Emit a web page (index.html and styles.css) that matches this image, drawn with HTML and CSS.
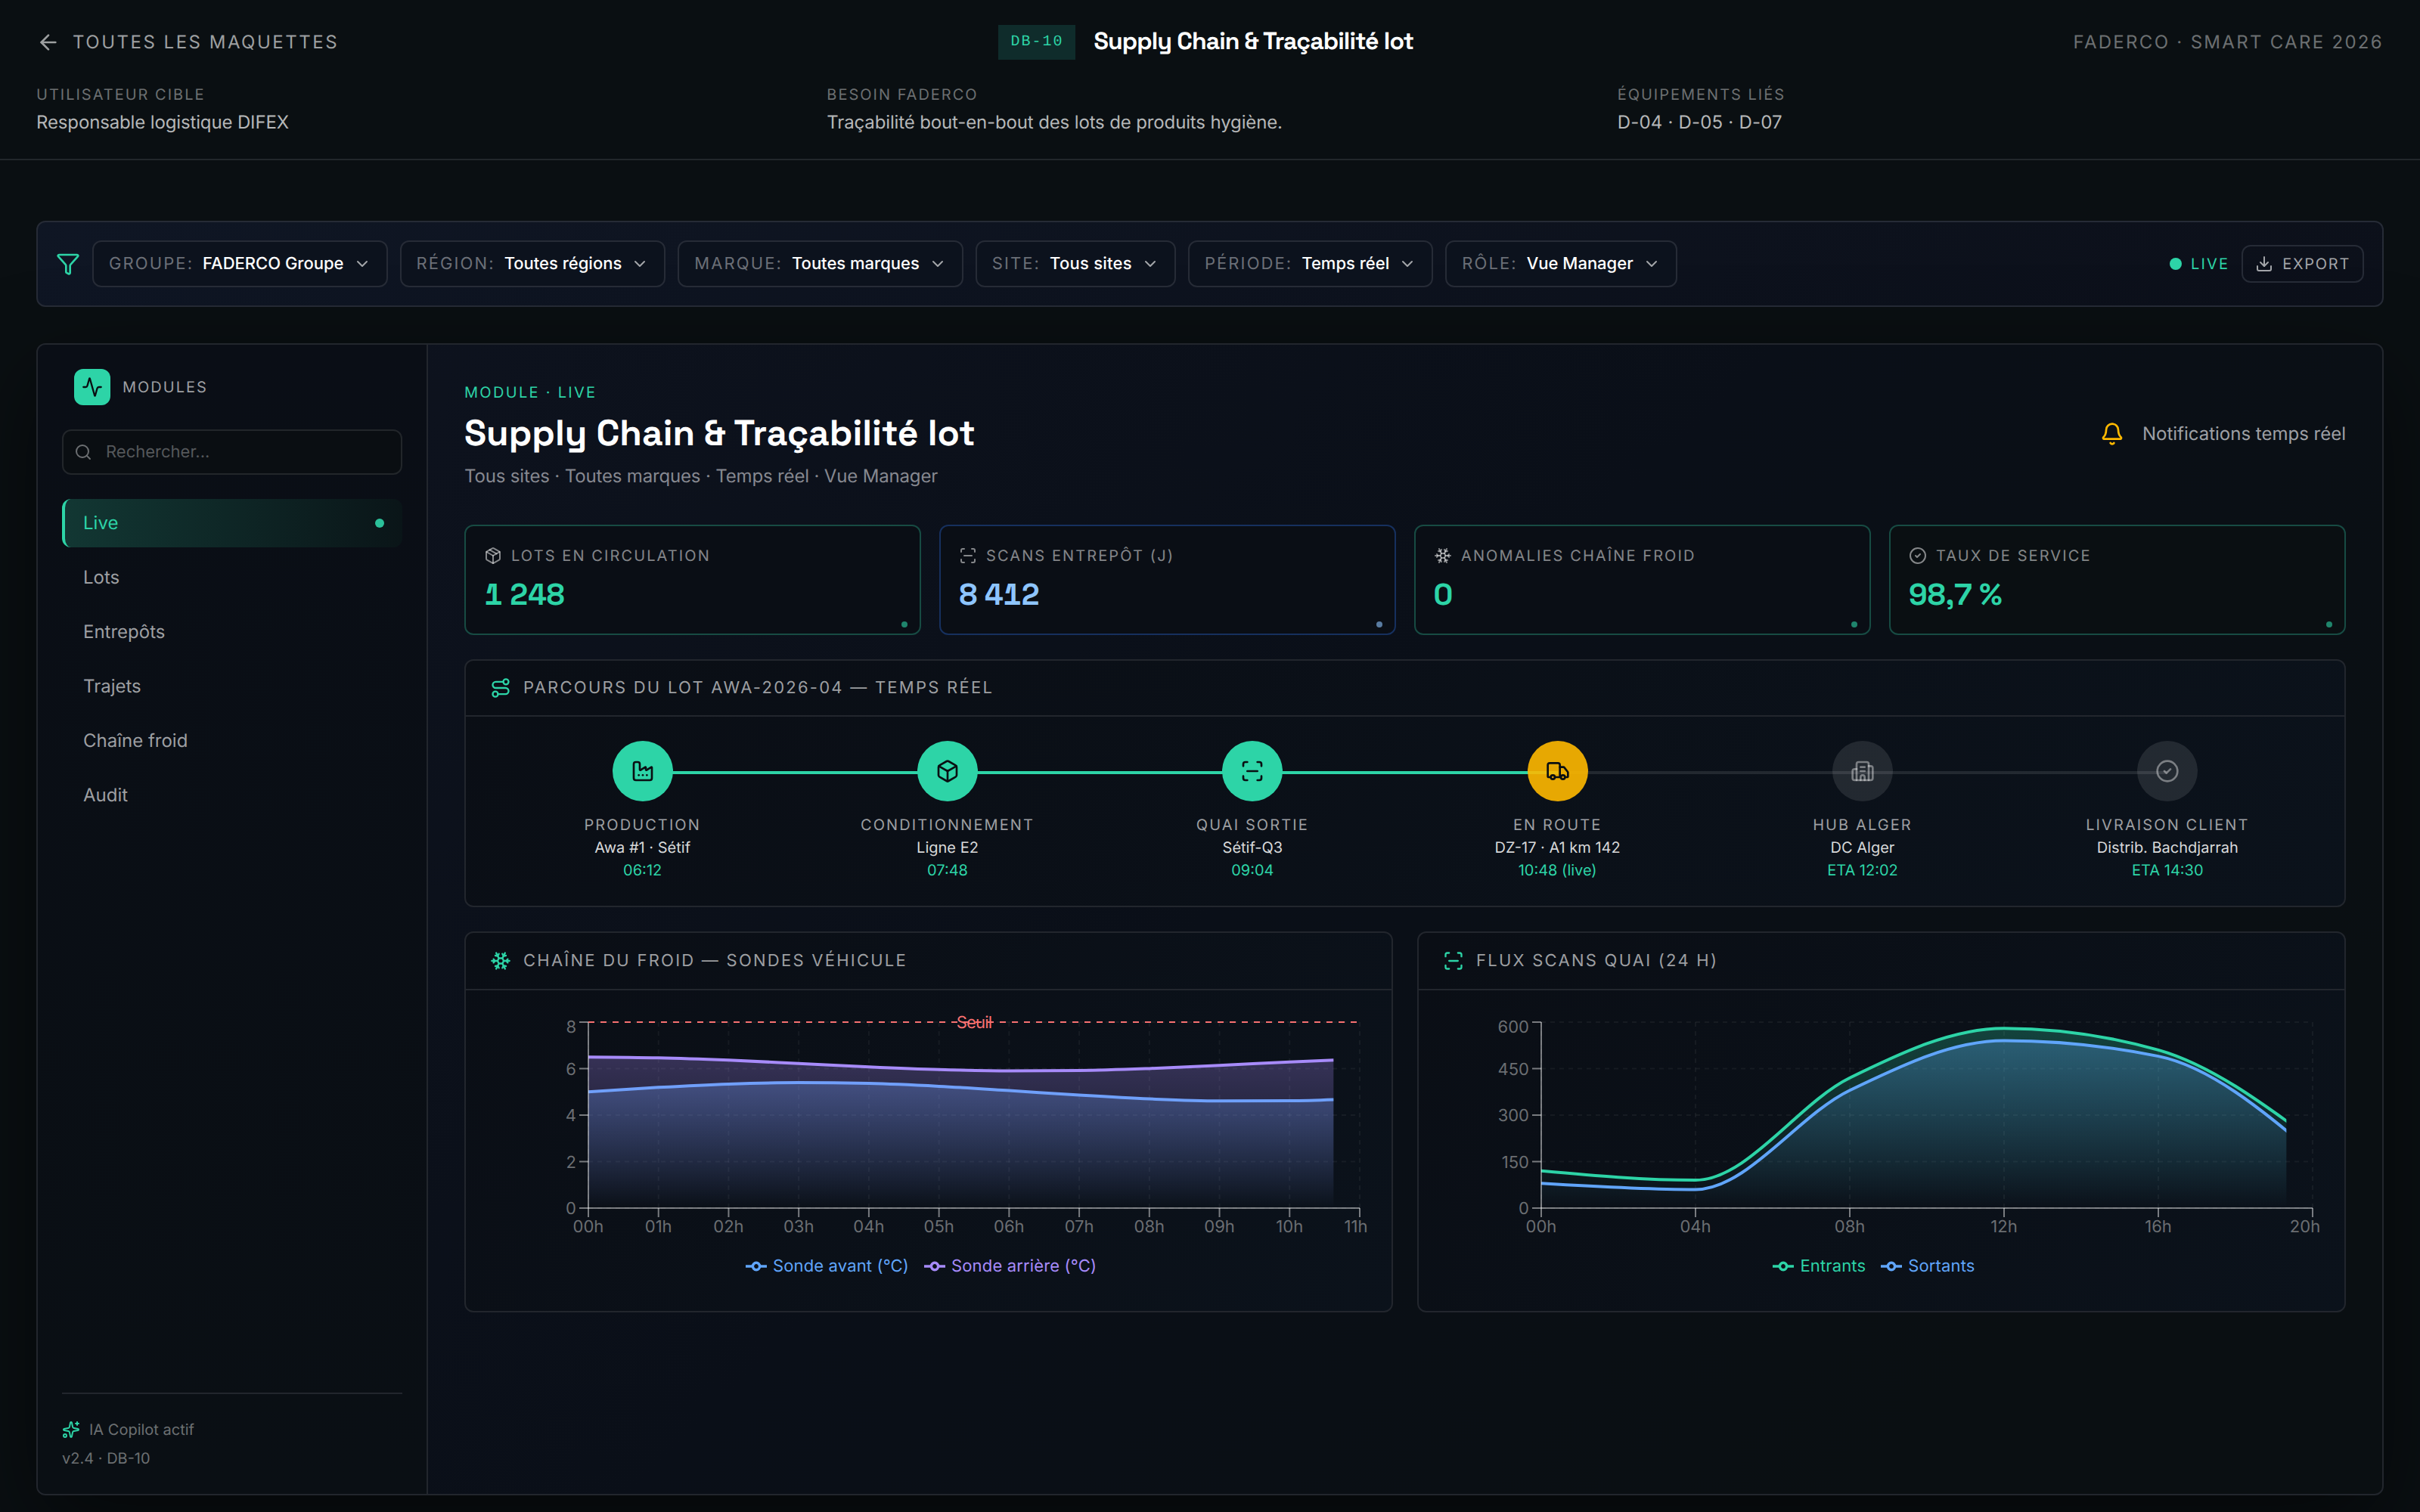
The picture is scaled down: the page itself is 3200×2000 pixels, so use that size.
FILE: index.html
```html
<!DOCTYPE html>
<html lang="fr">
<head>
    <meta charset="UTF-8">
    <title>Supply Chain &amp; Traçabilité lot</title>
    <link rel="stylesheet" href="styles.css">
</head>
<body>
    <!-- icon sprite -->
    <svg class="sprite" aria-hidden="true">
        <symbol id="i-arrow-left" viewBox="0 0 24 24"><path d="m12 19-7-7 7-7"/><path d="M19 12H5"/></symbol>
        <symbol id="i-funnel" viewBox="0 0 24 24"><path d="M10 20a1 1 0 0 0 .553.895l2 1A1 1 0 0 0 14 21v-7a2 2 0 0 1 .517-1.341L21.74 4.67A1 1 0 0 0 21 3H3a1 1 0 0 0-.742 1.67l7.225 7.989A2 2 0 0 1 10 14z"/></symbol>
        <symbol id="i-chevron" viewBox="0 0 24 24"><path d="m6 9 6 6 6-6"/></symbol>
        <symbol id="i-download" viewBox="0 0 24 24"><path d="M12 15V3"/><path d="M21 15v4a2 2 0 0 1-2 2H5a2 2 0 0 1-2-2v-4"/><path d="m7 10 5 5 5-5"/></symbol>
        <symbol id="i-activity" viewBox="0 0 24 24"><path d="M22 12h-2.48a2 2 0 0 0-1.93 1.46l-2.35 8.36a.25.25 0 0 1-.48 0L9.24 2.18a.25.25 0 0 0-.48 0l-2.35 8.36A2 2 0 0 1 4.49 12H2"/></symbol>
        <symbol id="i-search" viewBox="0 0 24 24"><path d="m21 21-4.34-4.34"/><circle cx="11" cy="11" r="8"/></symbol>
        <symbol id="i-sparkles" viewBox="0 0 24 24"><path d="M11.017 2.814a1 1 0 0 1 1.966 0l1.051 5.558a2 2 0 0 0 1.594 1.594l5.558 1.051a1 1 0 0 1 0 1.966l-5.558 1.051a2 2 0 0 0-1.594 1.594l-1.051 5.558a1 1 0 0 1-1.966 0l-1.051-5.558a2 2 0 0 0-1.594-1.594l-5.558-1.051a1 1 0 0 1 0-1.966l5.558-1.051a2 2 0 0 0 1.594-1.594z"/><path d="M20 2v4"/><path d="M22 4h-4"/><circle cx="4" cy="20" r="2"/></symbol>
        <symbol id="i-bell" viewBox="0 0 24 24"><path d="M10.268 21a2 2 0 0 0 3.464 0"/><path d="M3.262 15.326A1 1 0 0 0 4 17h16a1 1 0 0 0 .74-1.673C19.41 13.956 18 12.499 18 8A6 6 0 0 0 6 8c0 4.499-1.411 5.956-2.738 7.326"/></symbol>
        <symbol id="i-package" viewBox="0 0 24 24"><path d="M11 21.73a2 2 0 0 0 2 0l7-4A2 2 0 0 0 21 16V8a2 2 0 0 0-1-1.73l-7-4a2 2 0 0 0-2 0l-7 4A2 2 0 0 0 3 8v8a2 2 0 0 0 1 1.73z"/><path d="M12 22V12"/><path d="M3.29 7 12 12l8.71-5"/><path d="m7.5 4.27 9 5.15"/></symbol>
        <symbol id="i-box" viewBox="0 0 24 24"><path d="M21 8a2 2 0 0 0-1-1.73l-7-4a2 2 0 0 0-2 0l-7 4A2 2 0 0 0 3 8v8a2 2 0 0 0 1 1.73l7 4a2 2 0 0 0 2 0l7-4A2 2 0 0 0 21 16Z"/><path d="m3.3 7 8.7 5 8.7-5"/><path d="M12 22V12"/></symbol>
        <symbol id="i-scan" viewBox="0 0 24 24"><path d="M3 7V5a2 2 0 0 1 2-2h2"/><path d="M17 3h2a2 2 0 0 1 2 2v2"/><path d="M21 17v2a2 2 0 0 1-2 2h-2"/><path d="M7 21H5a2 2 0 0 1-2-2v-2"/><path d="M7 12h10"/></symbol>
        <symbol id="i-snow" viewBox="0 0 24 24"><path d="m10 20-1.25-2.5L6 18"/><path d="M10 4 8.75 6.5 6 6"/><path d="m14 20 1.25-2.5L18 18"/><path d="m14 4 1.25 2.5L18 6"/><path d="m17 21-3-6h-4"/><path d="m17 3-3 6 1.5 3"/><path d="M2 12h6.5L10 9"/><path d="m20 10-1.5 2 1.5 2"/><path d="M22 12h-6.5L14 15"/><path d="m4 10 1.5 2L4 14"/><path d="m7 21 3-6-1.5-3"/><path d="m7 3 3 6h4"/></symbol>
        <symbol id="i-check" viewBox="0 0 24 24"><circle cx="12" cy="12" r="10"/><path d="m9 12 2 2 4-4"/></symbol>
        <symbol id="i-route" viewBox="0 0 24 24"><circle cx="6" cy="19" r="3"/><path d="M9 19h8.5a3.5 3.5 0 0 0 0-7h-11a3.5 3.5 0 0 1 0-7H15"/><circle cx="18" cy="5" r="3"/></symbol>
        <symbol id="i-factory" viewBox="0 0 24 24"><path d="M12 16h.01"/><path d="M16 16h.01"/><path d="M8 16h.01"/><path d="M3 19a2 2 0 0 0 2 2h14a2 2 0 0 0 2-2V8.5a.5.5 0 0 0-.769-.422l-4.462 2.844A.5.5 0 0 1 15 10.5v-2a.5.5 0 0 0-.769-.422L9.77 10.922A.5.5 0 0 1 9 10.5V5a2 2 0 0 0-2-2H5a2 2 0 0 0-2 2z"/></symbol>
        <symbol id="i-truck" viewBox="0 0 24 24"><path d="M14 18V6a2 2 0 0 0-2-2H4a2 2 0 0 0-2 2v11a1 1 0 0 0 1 1h2"/><path d="M15 18H9"/><path d="M19 18h2a1 1 0 0 0 1-1v-3.65a1 1 0 0 0-.22-.624l-3.48-4.35A1 1 0 0 0 17.52 8H14"/><circle cx="17" cy="18" r="2"/><circle cx="7" cy="18" r="2"/></symbol>
        <symbol id="i-building" viewBox="0 0 24 24"><path d="M10 12h4"/><path d="M10 8h4"/><path d="M14 21v-3a2 2 0 0 0-4 0v3"/><path d="M6 10H4a2 2 0 0 0-2 2v7a2 2 0 0 0 2 2h16a2 2 0 0 0 2-2V9a2 2 0 0 0-2-2h-2"/><path d="M6 21V5a2 2 0 0 1 2-2h8a2 2 0 0 1 2 2v16"/></symbol>
    </svg>

    <header class="topbar">
        <div class="topbar-row">
            <a class="back"><svg class="icon icon-32"><use href="#i-arrow-left"/></svg>Toutes les maquettes</a>
            <div class="topbar-title">
                <span class="code">DB-10</span>
                <h1>Supply Chain &amp; Traçabilité lot</h1>
            </div>
            <span class="brand">FADERCO · Smart Care 2026</span>
        </div>
        <dl class="meta">
            <div><dt>Utilisateur cible</dt><dd>Responsable logistique DIFEX</dd></div>
            <div><dt>Besoin FADERCO</dt><dd>Traçabilité bout-en-bout des lots de produits hygiène.</dd></div>
            <div><dt>Équipements liés</dt><dd class="codes">D-04 · D-05 · D-07</dd></div>
        </dl>
    </header>

    <main class="page">
        <section class="filters">
            <svg class="icon icon-32 green"><use href="#i-funnel"/></svg>
            <button class="select"><span>Groupe:</span><b>FADERCO Groupe</b><svg class="icon icon-24"><use href="#i-chevron"/></svg></button>
            <button class="select"><span>Région:</span><b>Toutes régions</b><svg class="icon icon-24"><use href="#i-chevron"/></svg></button>
            <button class="select"><span>Marque:</span><b>Toutes marques</b><svg class="icon icon-24"><use href="#i-chevron"/></svg></button>
            <button class="select wide"><span>Site:</span><b>Tous sites</b><svg class="icon icon-24"><use href="#i-chevron"/></svg></button>
            <button class="select"><span>Période:</span><b>Temps réel</b><svg class="icon icon-24"><use href="#i-chevron"/></svg></button>
            <button class="select"><span>Rôle:</span><b>Vue Manager</b><svg class="icon icon-24"><use href="#i-chevron"/></svg></button>
            <div class="filters-right">
                <span class="live"><i class="live-dot"></i>Live</span>
                <button class="export"><svg class="icon icon-24"><use href="#i-download"/></svg>Export</button>
            </div>
        </section>

        <section class="shell">
            <aside class="sidebar">
                <div class="sidebar-head">
                    <span class="logo"><svg class="icon icon-28"><use href="#i-activity"/></svg></span>
                    <span>Modules</span>
                </div>
                <div class="search"><svg class="icon icon-24"><use href="#i-search"/></svg>Rechercher...</div>
                <nav class="nav">
                    <a class="active">Live<i></i></a>
                    <a>Lots</a>
                    <a>Entrepôts</a>
                    <a>Trajets</a>
                    <a>Chaîne froid</a>
                    <a>Audit</a>
                </nav>
                <div class="sidebar-foot">
                    <div><svg class="icon icon-24 green"><use href="#i-sparkles"/></svg>IA Copilot actif</div>
                    <div>v2.4 · DB-10</div>
                </div>
            </aside>

            <div class="content">
                <div class="content-head">
                    <div>
                        <div class="eyebrow">Module · Live</div>
                        <h2>Supply Chain &amp; Traçabilité lot</h2>
                        <p>Tous sites · Toutes marques · Temps réel · Vue Manager</p>
                    </div>
                    <div class="notif"><svg class="icon icon-32"><use href="#i-bell"/></svg>Notifications temps réel</div>
                </div>

                <div class="kpis">
                    <div class="kpi"><div class="kpi-label"><svg class="icon icon-24"><use href="#i-package"/></svg>Lots en circulation</div><div class="kpi-value">1 248</div></div>
                    <div class="kpi blue"><div class="kpi-label"><svg class="icon icon-24"><use href="#i-scan"/></svg>Scans entrepôt (J)</div><div class="kpi-value">8 412</div></div>
                    <div class="kpi"><div class="kpi-label"><svg class="icon icon-24"><use href="#i-snow"/></svg>Anomalies chaîne froid</div><div class="kpi-value">0</div></div>
                    <div class="kpi"><div class="kpi-label"><svg class="icon icon-24"><use href="#i-check"/></svg>Taux de service</div><div class="kpi-value">98,7 %</div></div>
                </div>

                <div class="card">
                    <div class="card-head"><svg class="icon icon-28 green"><use href="#i-route"/></svg>Parcours du lot AWA-2026-04 — temps réel</div>
                    <ol class="steps">
                        <li class="done"><div class="bubble"><svg class="icon icon-32"><use href="#i-factory"/></svg></div><em>Production</em><span>Awa #1 · Sétif</span><time>06:12</time></li>
                        <li class="done"><div class="bubble"><svg class="icon icon-32"><use href="#i-box"/></svg></div><em>Conditionnement</em><span>Ligne E2</span><time>07:48</time></li>
                        <li class="done"><div class="bubble"><svg class="icon icon-32"><use href="#i-scan"/></svg></div><em>Quai sortie</em><span>Sétif-Q3</span><time>09:04</time></li>
                        <li class="current"><div class="bubble"><svg class="icon icon-32"><use href="#i-truck"/></svg></div><em>En route</em><span>DZ-17 · A1 km 142</span><time>10:48 (live)</time></li>
                        <li><div class="bubble"><svg class="icon icon-32"><use href="#i-building"/></svg></div><em>Hub Alger</em><span>DC Alger</span><time>ETA 12:02</time></li>
                        <li><div class="bubble"><svg class="icon icon-32"><use href="#i-check"/></svg></div><em>Livraison client</em><span>Distrib. Bachdjarrah</span><time>ETA 14:30</time></li>
                    </ol>
                </div>

                <div class="charts">
                    <div class="card">
                        <div class="card-head"><svg class="icon icon-28 green"><use href="#i-snow"/></svg>Chaîne du froid — sondes véhicule</div>
                        <div class="chart">
                            <svg id="chart-cold" viewBox="0 0 1160 360"></svg>
                            <div class="legend">
                                <span class="c-blue"><svg viewBox="0 0 32 32"><path d="M0 16h10.7a5.3 5.3 0 1 1 10.6 0H32M21.3 16a5.3 5.3 0 1 1-10.6 0"/></svg>Sonde avant (°C)</span>
                                <span class="c-violet"><svg viewBox="0 0 32 32"><path d="M0 16h10.7a5.3 5.3 0 1 1 10.6 0H32M21.3 16a5.3 5.3 0 1 1-10.6 0"/></svg>Sonde arrière (°C)</span>
                            </div>
                        </div>
                    </div>
                    <div class="card">
                        <div class="card-head"><svg class="icon icon-28 green"><use href="#i-scan"/></svg>Flux scans quai (24 h)</div>
                        <div class="chart">
                            <svg id="chart-scans" viewBox="0 0 1160 360"></svg>
                            <div class="legend">
                                <span class="c-green"><svg viewBox="0 0 32 32"><path d="M0 16h10.7a5.3 5.3 0 1 1 10.6 0H32M21.3 16a5.3 5.3 0 1 1-10.6 0"/></svg>Entrants</span>
                                <span class="c-blue"><svg viewBox="0 0 32 32"><path d="M0 16h10.7a5.3 5.3 0 1 1 10.6 0H32M21.3 16a5.3 5.3 0 1 1-10.6 0"/></svg>Sortants</span>
                            </div>
                        </div>
                    </div>
                </div>
            </div>
        </section>
    </main>
    <script src="charts.js"></script>
</body>
</html>
```

FILE: styles.css
```css
* { box-sizing: border-box; }
body { margin: 0; height: 2000px; overflow: hidden; background: #0a0f12; color: #fff; font-family: Inter, sans-serif; font-size: 24px; line-height: 1.5; text-rendering: geometricPrecision; }
h1, h2, p, dl, dd, ol { margin: 0; padding: 0; }
button { font: inherit; color: inherit; background: none; text-rendering: inherit; }
.sprite { position: absolute; width: 0; height: 0; }
.icon { flex: none; fill: none; stroke: currentColor; stroke-width: 2; stroke-linecap: round; stroke-linejoin: round; }
.icon-24 { width: 24px; height: 24px; }
.icon-28 { width: 28px; height: 28px; }
.icon-32 { width: 32px; height: 32px; }
.green { color: #2dd4a7; }

/* top bar */
.topbar { height: 212px; padding: 32px 48px 0; border-bottom: 2px solid #22272b; }
.topbar-row { display: flex; align-items: center; justify-content: space-between; height: 48px; }
.back { display: flex; align-items: center; gap: 16px; color: #9d9fa0; text-transform: uppercase; letter-spacing: 2.5px; }
.topbar-title { display: flex; align-items: center; gap: 24px; }
.code { height: 46px; padding: 7px 16px 0; background: #0f2c2b; color: #2dd4a7; font: 20px/32px "Liberation Mono", monospace; letter-spacing: 2px; }
h1 { padding-bottom: 2px; font-family: "Space Grotesk", Inter, sans-serif; font-size: 32px; font-weight: 600; letter-spacing: -0.93px; line-height: 46px; }
.brand { color: #6c6f71; text-transform: uppercase; letter-spacing: 2.3px; }
.meta { display: grid; grid-template-columns: repeat(3, 1fr); gap: 32px; margin-top: 30px; }
.meta dt { color: #6c6f71; font-size: 20px; line-height: 30px; letter-spacing: 2px; text-transform: uppercase; }
.meta dd { color: #b5b7b8; font-size: 24px; line-height: 36px; margin-top: 4px; letter-spacing: -0.14px; }
.meta .codes { letter-spacing: 0.2px; }

.page { padding: 80px 48px 0; }

/* filters */
.filters { display: flex; align-items: center; gap: 16px; height: 114px; padding: 0 24px; border: 2px solid #262b36; border-radius: 12px; background: linear-gradient(135deg, #0f1624, #0c101a); }
.select { display: flex; align-items: center; gap: 12px; height: 62px; padding: 0 20px; border: 2px solid #262b36; border-radius: 12px; background: #0c121d; font-size: 22px; }
.select span { color: #6b6f77; text-transform: uppercase; letter-spacing: 2.1px; }
.select b { font-weight: 500; }
.select.wide b { letter-spacing: 0.25px; }
.select .icon, .export { color: #a3a5a9; }
.filters-right { display: flex; align-items: center; gap: 16px; margin-left: auto; }
.live { display: flex; align-items: center; gap: 12px; color: #2dd4a7; font-size: 20px; letter-spacing: 2.2px; text-transform: uppercase; }
.live-dot { width: 16px; height: 16px; border-radius: 50%; background: #2dd4a7; }
.export { display: flex; align-items: center; gap: 12px; height: 50px; padding: 0 16px; border: 2px solid #262b36; border-radius: 12px; font-size: 20px; letter-spacing: 1.7px; text-transform: uppercase; }

/* shell */
.shell { display: grid; grid-template-columns: 516px 1fr; height: 1524px; margin-top: 48px; border: 2px solid #22262d; border-radius: 12px; background: linear-gradient(135deg, #0e131f, #0a0f18 50%, #0a0f12 85%); box-shadow: 0 40px 120px rgba(0, 0, 0, 0.5); overflow: hidden; }
.sidebar { display: flex; flex-direction: column; padding: 32px; border-right: 2px solid #22262d; background: linear-gradient(180deg, #0a0e16, #0a0f14); }
.sidebar-head { display: flex; align-items: center; gap: 16px; padding: 0 16px; color: #9d9fa2; font-size: 20px; letter-spacing: 2px; text-transform: uppercase; }
.logo { display: grid; place-items: center; width: 48px; height: 48px; border-radius: 12px; background: #2dd4a7; color: #0a0f12; }
.search { display: flex; align-items: center; gap: 18px; height: 60px; margin-top: 32px; padding: 0 14px; border: 2px solid #22262a; border-radius: 12px; background: #0a0e12; color: #55585b; font-size: 22px; }
.search .icon { color: #6c6f72; }
.nav { display: grid; gap: 8px; margin-top: 32px; }
.nav a { display: flex; align-items: center; height: 64px; padding: 0 24px 0 28px; border-radius: 12px; color: #9d9fa2; }
.nav .active { padding-left: 24px; border-left: 4px solid #2dd4a7; background: linear-gradient(90deg, #123733, #0a1518); color: #2dd4a7; }
.nav i { width: 12px; height: 12px; margin-left: auto; border-radius: 50%; background: #2bc19a; }
.sidebar-foot { margin-top: auto; padding-top: 32px; border-top: 2px solid #22262d; color: #6c6f72; font-size: 20px; line-height: 30px; }
.sidebar-foot div { display: flex; align-items: center; gap: 12px; }
.sidebar-foot div + div { margin-top: 8px; }

.content { padding: 48px; }
.content-head { display: flex; justify-content: space-between; height: 140px; }
.eyebrow { color: #2dd4a7; font-size: 20px; line-height: 30px; letter-spacing: 2.3px; text-transform: uppercase; }
h2 { margin-top: 8px; font-family: "Space Grotesk", Inter, sans-serif; font-size: 48px; font-weight: 600; line-height: 64px; }
.content-head p { margin-top: 6px; color: #868890; font-size: 24px; line-height: 36px; letter-spacing: -0.16px; }
.notif { display: flex; align-items: center; gap: 24px; color: #9ea0a5; }
.notif .icon { color: #ffb900; }

/* kpis */
.kpis { display: grid; grid-template-columns: repeat(4, 1fr); gap: 24px; margin-top: 50px; }
.kpi { position: relative; height: 146px; padding: 23px 24px; border: 2px solid #174b43; border-radius: 12px; background: #0a0e15; color: #2dd4a7; }
.kpi:last-child { background: #0a0f12; }
.kpi-label { display: flex; align-items: center; gap: 12px; color: rgba(255, 255, 255, 0.5); font-size: 20px; line-height: 32px; letter-spacing: 2.1px; text-transform: uppercase; }
.kpi-value { margin-top: 8px; font-family: "Space Grotesk", Inter, sans-serif; font-size: 40px; font-weight: 600; font-variant-numeric: tabular-nums; letter-spacing: -0.6px; line-height: 56px; }
.kpi::after { content: ""; position: absolute; right: 16px; bottom: 8px; width: 8px; height: 8px; border-radius: 50%; background: currentColor; opacity: 0.6; }
.kpi.blue { border-color: #16305e; color: #8ec5ff; }

/* cards */
.card { border: 2px solid #22262d; border-radius: 12px; background: linear-gradient(135deg, #0a0e15, #0b121b); }
.card-head { display: flex; align-items: center; gap: 16px; height: 74px; padding: 0 32px; border-bottom: 2px solid #22262d; color: #9d9fa2; font-size: 22px; letter-spacing: 2.25px; text-transform: uppercase; }
.kpis + .card { margin-top: 32px; height: 328px; }
.charts { display: grid; grid-template-columns: 1fr 1fr; gap: 32px; margin-top: 32px; }
.charts .card { height: 504px; }
.charts .card-head { height: 76px; }

/* lot timeline */
.steps { display: grid; grid-template-columns: repeat(6, 1fr); padding: 32px 32px 0; list-style: none; font-size: 20px; line-height: 30px; text-align: center; }
.steps li { position: relative; display: flex; flex-direction: column; align-items: center; }
.steps li::before { content: ""; position: absolute; top: 40px; left: 50%; width: 100%; height: 4px; background: rgba(255, 255, 255, 0.1); }
.steps li:last-child::before { display: none; }
.steps .done::before { background: #2dd4a7; }
.bubble { display: grid; place-items: center; position: relative; width: 80px; height: 80px; margin-bottom: 16px; border-radius: 50%; background: rgba(255, 255, 255, 0.1); color: rgba(255, 255, 255, 0.4); }
.done .bubble { background: #2dd4a7; color: #0a0f12; }
.current .bubble { background: rgba(255, 185, 0, 0.9); color: #0a0f12; }
.steps em { color: #9d9fa2; font-style: normal; letter-spacing: 2.1px; text-transform: uppercase; }
.steps span { color: #d8d9da; }
.steps time { color: #2dd4a7; }

/* charts */
.chart { position: relative; padding: 32px; }
.chart > svg { display: block; width: 100%; height: 360px; overflow: visible; }
.chart text { font-family: Inter, sans-serif; font-size: 22px; fill: #6b6e72; }
.chart .threshold { fill: #f87171; letter-spacing: -0.8px; }
.legend { display: flex; justify-content: center; position: absolute; left: 42px; right: 42px; bottom: 41px; font-size: 22px; line-height: 36px; letter-spacing: 0.15px; }
.legend span { display: flex; align-items: center; gap: 8px; margin-right: 20px; }
.legend svg { width: 28px; height: 28px; fill: none; stroke: currentColor; stroke-width: 4; }
.c-blue { color: #60a5fa; }
.c-violet { color: #a78bfa; }
.c-green { color: #2dd4a7; }
```

FILE: charts.js
```js
// small area chart renderer, monotone interpolation
const PLOT = { left: 130, right: 1150, top: 10, bottom: 256 };
const REVEAL = 0.966;

const monotonePath = (pts) => {
    const n = pts.length;
    const h = pts[1][0] - pts[0][0];
    const s = [];
    for (let i = 0; i < n - 1; i++) s.push((pts[i + 1][1] - pts[i][1]) / h);
    const t = new Array(n);
    for (let i = 1; i < n - 1; i++) {
        const p = (s[i - 1] + s[i]) / 2;
        t[i] = (Math.sign(s[i - 1]) + Math.sign(s[i])) * Math.min(Math.abs(s[i - 1]), Math.abs(s[i]), 0.5 * Math.abs(p));
    }
    t[0] = (3 * s[0] - t[1]) / 2;
    t[n - 1] = (3 * s[n - 2] - t[n - 2]) / 2;
    let d = `M${pts[0][0]},${pts[0][1]}`;
    for (let i = 0; i < n - 1; i++) {
        const [x0, y0] = pts[i];
        const [x1, y1] = pts[i + 1];
        d += `C${x0 + h / 3},${y0 + t[i] * h / 3} ${x1 - h / 3},${y1 - t[i + 1] * h / 3} ${x1},${y1}`;
    }
    return d;
};

const drawChart = (id, { labels, ticks, series, threshold, lastShift }) => {
    const max = ticks[ticks.length - 1];
    const x = (i) => PLOT.left + (PLOT.right - PLOT.left) * i / (labels.length - 1);
    const y = (v) => PLOT.bottom - (PLOT.bottom - PLOT.top) * v / max;
    let out = `<defs><clipPath id="${id}-clip"><rect x="${PLOT.left}" y="0" width="${(PLOT.right - PLOT.left) * REVEAL}" height="${PLOT.bottom}"/></clipPath>`;
    series.forEach((s, i) => {
        out += `<linearGradient id="${id}-g${i}" x1="0" y1="0" x2="0" y2="1"><stop offset="0" stop-color="${s.color}" stop-opacity="${s.opacity}"/><stop offset="1" stop-color="${s.color}" stop-opacity="0"/></linearGradient>`;
    });
    out += '</defs>';

    const grid = 'stroke="#fff" stroke-opacity="0.05" stroke-width="2" stroke-dasharray="6 6"';
    ticks.forEach((v) => { out += `<path d="M${PLOT.left} ${y(v)}H${PLOT.right}" ${grid}/>`; });
    labels.forEach((l, i) => { out += `<path d="M${x(i)} ${PLOT.top}V${PLOT.bottom}" ${grid}/>`; });

    out += `<g clip-path="url(#${id}-clip)">`;
    series.forEach((s, i) => {
        const d = monotonePath(s.data.map((v, k) => [x(k), y(v)]));
        out += `<path d="${d}V${PLOT.bottom}H${PLOT.left}Z" fill="url(#${id}-g${i})"/>`;
        out += `<path d="${d}" fill="none" stroke="${s.color}" stroke-width="4"/>`;
    });
    out += '</g>';

    const axis = 'stroke="#fff" stroke-opacity="0.45" stroke-width="2"';
    out += `<path d="M${PLOT.left} ${PLOT.bottom}H${PLOT.right}" ${axis}/><path d="M${PLOT.left} ${PLOT.top}V${PLOT.bottom}" ${axis}/>`;
    ticks.forEach((v, i) => {
        const shift = i === ticks.length - 1 ? 6 : 0;
        out += `<path d="M${PLOT.left - 12} ${y(v)}H${PLOT.left}" ${axis}/><text x="${PLOT.left - 16}" y="${y(v) + 8 + shift}" text-anchor="end">${v}</text>`;
    });
    labels.forEach((l, i) => {
        const shift = i === labels.length - 1 ? lastShift : 0;
        out += `<path d="M${x(i)} ${PLOT.bottom}v12" ${axis}/><text x="${x(i) - shift}" y="${PLOT.bottom + 32}" text-anchor="middle">${l}</text>`;
    });
    if (threshold) {
        out += `<path d="M${PLOT.left} ${y(threshold.value)}H${PLOT.right}" stroke="#f87171" stroke-width="2" stroke-dasharray="8 8"/>`;
        out += `<text class="threshold" x="${(PLOT.left + PLOT.right) / 2}" y="${y(threshold.value) + 8}" text-anchor="middle">${threshold.label}</text>`;
    }
    document.getElementById(id).innerHTML = out;
};

const hours = Array.from({ length: 12 }, (_, i) => i);

drawChart('chart-cold', {
    labels: hours.map((i) => `${String(i).padStart(2, '0')}h`),
    ticks: [0, 2, 4, 6, 8],
    lastShift: 5,
    threshold: { value: 8, label: 'Seuil' },
    series: [
        { color: '#60a5fa', opacity: 0.3, data: hours.map((i) => 5 + Math.sin(i / 2) * 0.4) },
        { color: '#a78bfa', opacity: 0.28, data: hours.map((i) => 6.2 + Math.cos(i / 2) * 0.3) }
    ]
});

drawChart('chart-scans', {
    labels: ['00h', '04h', '08h', '12h', '16h', '20h'],
    ticks: [0, 150, 300, 450, 600],
    lastShift: 10,
    series: [
        { color: '#2dd4a7', opacity: 0.26, data: [120, 90, 420, 580, 510, 220] },
        { color: '#60a5fa', opacity: 0.3, data: [80, 60, 380, 540, 490, 180] }
    ]
});
```
